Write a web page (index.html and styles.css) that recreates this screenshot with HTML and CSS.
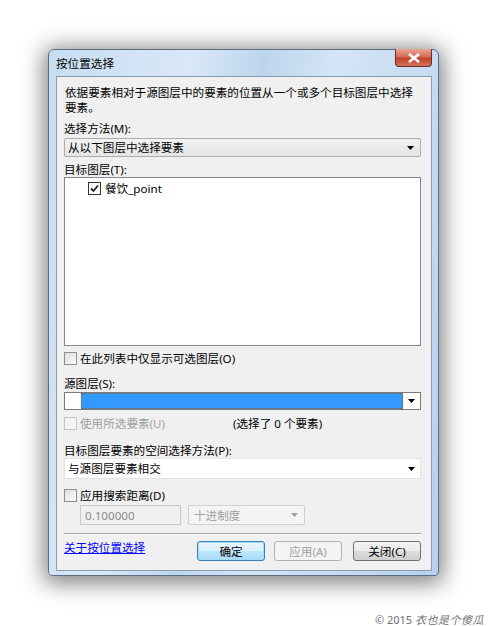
FILE: index.html
```html
<!DOCTYPE html>
<html lang="zh-CN">
<head>
  <meta charset="UTF-8" />
  <title>按位置选择</title>
  <link rel="stylesheet" href="styles.css">
</head>
<body>

  <div class="dialog">
    <div class="titlebar">
      <span class="title">按位置选择</span>
      <span class="close-btn">
        <svg width="12" height="10" viewBox="0 0 12 10"><path d="M1 1L11 9M11 1L1 9" stroke="#fff" stroke-width="2.6" fill="none"/></svg>
      </span>
    </div>

    <div class="client">
      <p class="desc">依据要素相对于源图层中的要素的位置从一个或多个目标图层中选择<br>要素。</p>

      <div class="label lbl-method">选择方法(M):</div>
      <div class="combo combo-method">
        <span>从以下图层中选择要素</span>
        <svg class="arrow" width="7" height="4" viewBox="0 0 7 4"><path d="M0 0h7L3.5 4z" fill="#000"/></svg>
      </div>

      <div class="label lbl-target">目标图层(T):</div>
      <div class="listbox">
        <div class="list-item">
          <span class="check">
            <svg width="9" height="9" viewBox="0 0 9 9"><path d="M1 4.5L3.5 7L8 1.5" stroke="#222" stroke-width="1.8" fill="none"/></svg>
          </span>
          餐饮_point
        </div>
      </div>

      <div class="check-row row-only">
        <span class="check"></span>在此列表中仅显示可选图层(O)
      </div>

      <div class="label lbl-source">源图层(S):</div>
      <div class="combo-source">
        <span class="src-blank"></span>
        <span class="src-sel"></span>
        <span class="src-btn">
          <svg width="7" height="4" viewBox="0 0 7 4"><path d="M0 0h7L3.5 4z" fill="#000"/></svg>
        </span>
      </div>

      <div class="check-row row-used disabled">
        <span class="check"></span>使用所选要素(U)
        <span class="sel-count">(选择了 0 个要素)</span>
      </div>

      <div class="label lbl-spatial">目标图层要素的空间选择方法(P):</div>
      <div class="combo combo-spatial">
        <span>与源图层要素相交</span>
        <svg class="arrow" width="7" height="4" viewBox="0 0 7 4"><path d="M0 0h7L3.5 4z" fill="#000"/></svg>
      </div>

      <div class="check-row row-dist">
        <span class="check"></span>应用搜索距离(D)
      </div>

      <div class="dist-row">
        <span class="dist-input">0.100000</span>
        <span class="dist-unit">
          <span>十进制度</span>
          <svg width="7" height="4" viewBox="0 0 7 4"><path d="M0 0h7L3.5 4z" fill="#a0a0a0"/></svg>
        </span>
      </div>

      <div class="separator"></div>

      <div class="footer-row">
        <a class="help-link" href="#">关于按位置选择</a>
        <div class="buttons">
          <span class="btn btn-default">确定</span>
          <span class="btn btn-disabled">应用(A)</span>
          <span class="btn">关闭(C)</span>
        </div>
      </div>
    </div>
  </div>

  <div class="credit">© 2015 <i>衣也是个傻瓜</i></div>

</body>
</html>
```

FILE: styles.css
```css
body {
  margin: 0;
  background: #fff;
  font-family: "Noto Sans", "Noto Sans CJK SC", sans-serif;
  font-size: 11.6px;
  color: #000;
  width: 488px;
  height: 626px;
  overflow: hidden;
}

.dialog {
  margin: 49px 0 0 48px;
  width: 391px;
  height: 527px;
  box-sizing: border-box;
  border: 1px solid #5b6d80;
  border-radius: 6px 6px 4px 4px;
  background: linear-gradient(100deg, #c7ddf2 0%, #d9e8f7 30%, #bcd5ee 45%, #d4e5f6 60%, #b7d1ec 100%);
  box-shadow: 0 3px 22px 4px rgba(0, 0, 0, 0.5);
  padding: 0 6px 4px 7px;
  display: flex;
  flex-direction: column;
}

.titlebar {
  height: 26px;
  position: relative;
  display: flex;
  align-items: center;
}

.title {
  color: #000;
  margin-top: 0;
}

.close-btn {
  position: absolute;
  top: -1px;
  right: 0;
  width: 37px;
  height: 18px;
  box-sizing: border-box;
  border: 1px solid #6d2e28;
  border-top: none;
  border-radius: 0 0 4px 4px;
  background: linear-gradient(to bottom, #e8a594 0%, #d56d5a 45%, #c2412b 55%, #d6745e 100%);
  display: flex;
  align-items: center;
  justify-content: center;
}

.client {
  flex: 1;
  background: #f0f0f0;
  border: 1px solid #8a9cb0;
  padding: 8px 10px 0 7px;
  line-height: 15px;
}

.desc {
  margin: 0 0 0 1px;
  white-space: nowrap;
}

.label {
  height: 15px;
}

.lbl-method { margin-top: 6px; }
.lbl-target { margin-top: 5px; }
.lbl-source { margin-top: 10px; }
.lbl-spatial { margin-top: 12px; }

.combo {
  box-sizing: border-box;
  display: flex;
  align-items: center;
  justify-content: space-between;
  padding: 0 6px 0 3px;
}

.combo-method {
  margin-top: 2px;
  height: 19px;
  border: 1px solid #acacac;
  border-radius: 2px;
  background: linear-gradient(to bottom, #f2f2f2, #e5e5e5);
}

.combo-spatial {
  height: 21px;
  border: 1px solid #e3e3e3;
  background: #fff;
  padding-right: 5px;
}

.listbox {
  height: 169px;
  box-sizing: border-box;
  border: 1px solid #828790;
  background: #fff;
}

.list-item {
  display: flex;
  align-items: center;
  gap: 4px;
  padding: 3px 0 0 23px;
}

.check {
  width: 13px;
  height: 13px;
  box-sizing: border-box;
  border: 1px solid #8f8f8f;
  background: linear-gradient(135deg, #dedede, #fbfbfb);
  display: inline-flex;
  align-items: center;
  justify-content: center;
  flex: none;
}

.list-item .check {
  background: #fff;
  border-color: #333;
}

.check-row {
  display: flex;
  align-items: center;
  gap: 3px;
  height: 15px;
}

.row-only { margin-top: 5px; }
.row-used { margin-top: 6px; }
.row-dist { margin-top: 9px; }

.disabled {
  color: #a0a0a0;
}

.disabled .check {
  border-color: #c4c4c4;
  background: #f4f4f4;
}

.sel-count {
  color: #000;
  margin-left: 65px;
}

.combo-source {
  margin-top: 1px;
  height: 18px;
  box-sizing: border-box;
  border: 1px dotted #4a2c10;
  outline: 1px solid #7a7a7a;
  outline-offset: -1px;
  background: #fff;
  display: flex;
  align-items: stretch;
}

.src-blank {
  width: 16px;
}

.src-sel {
  flex: 1;
  background: #3399ff;
  border: 1px dotted #8a5a20;
}

.src-btn {
  width: 17px;
  display: flex;
  align-items: center;
  justify-content: center;
}

.dist-row {
  display: flex;
  gap: 7px;
  margin: 2px 0 0 16px;
  height: 20px;
}

.dist-input {
  width: 101px;
  box-sizing: border-box;
  border: 1px solid #c9c9c9;
  background: #f0f0f0;
  color: #8a8a8a;
  padding: 2px 0 0 4px;
}

.dist-unit {
  width: 117px;
  box-sizing: border-box;
  border: 1px solid #d0d0d0;
  border-radius: 2px;
  background: #f4f4f4;
  color: #a0a0a0;
  display: flex;
  align-items: center;
  justify-content: space-between;
  padding: 0 6px 0 5px;
}

.separator {
  margin-top: 8px;
  height: 1px;
  background: #a0a0a0;
  border-bottom: 1px solid #fff;
}

.footer-row {
  display: flex;
  justify-content: space-between;
  align-items: flex-start;
  margin-top: 6px;
}

.help-link {
  color: #0000ff;
  text-decoration: underline;
  margin-top: -1px;
}

.buttons {
  display: flex;
  gap: 9px;
}

.btn {
  width: 68px;
  height: 20px;
  box-sizing: border-box;
  border: 1px solid #707070;
  border-radius: 3px;
  background: linear-gradient(to bottom, #f2f2f2 0%, #ebebeb 50%, #dddddd 51%, #cfcfcf 100%);
  display: flex;
  align-items: center;
  justify-content: center;
}

.btn-default {
  border-color: #3c7fb1;
  background: linear-gradient(to bottom, #eaf6fd 0%, #d9f0fc 50%, #bee6fd 51%, #a7d9f5 100%);
  box-shadow: inset 0 0 0 1px #9fdcff;
}

.btn-disabled {
  border-color: #adb2b5;
  background: #f4f4f4;
  color: #a0a0a0;
  margin-right: 2px;
}

.credit {
  margin-top: 35px;
  text-align: right;
  padding-right: 4px;
  font-size: 11px;
  color: #707070;
}

.credit i {
  letter-spacing: 0.5px;
}
```
